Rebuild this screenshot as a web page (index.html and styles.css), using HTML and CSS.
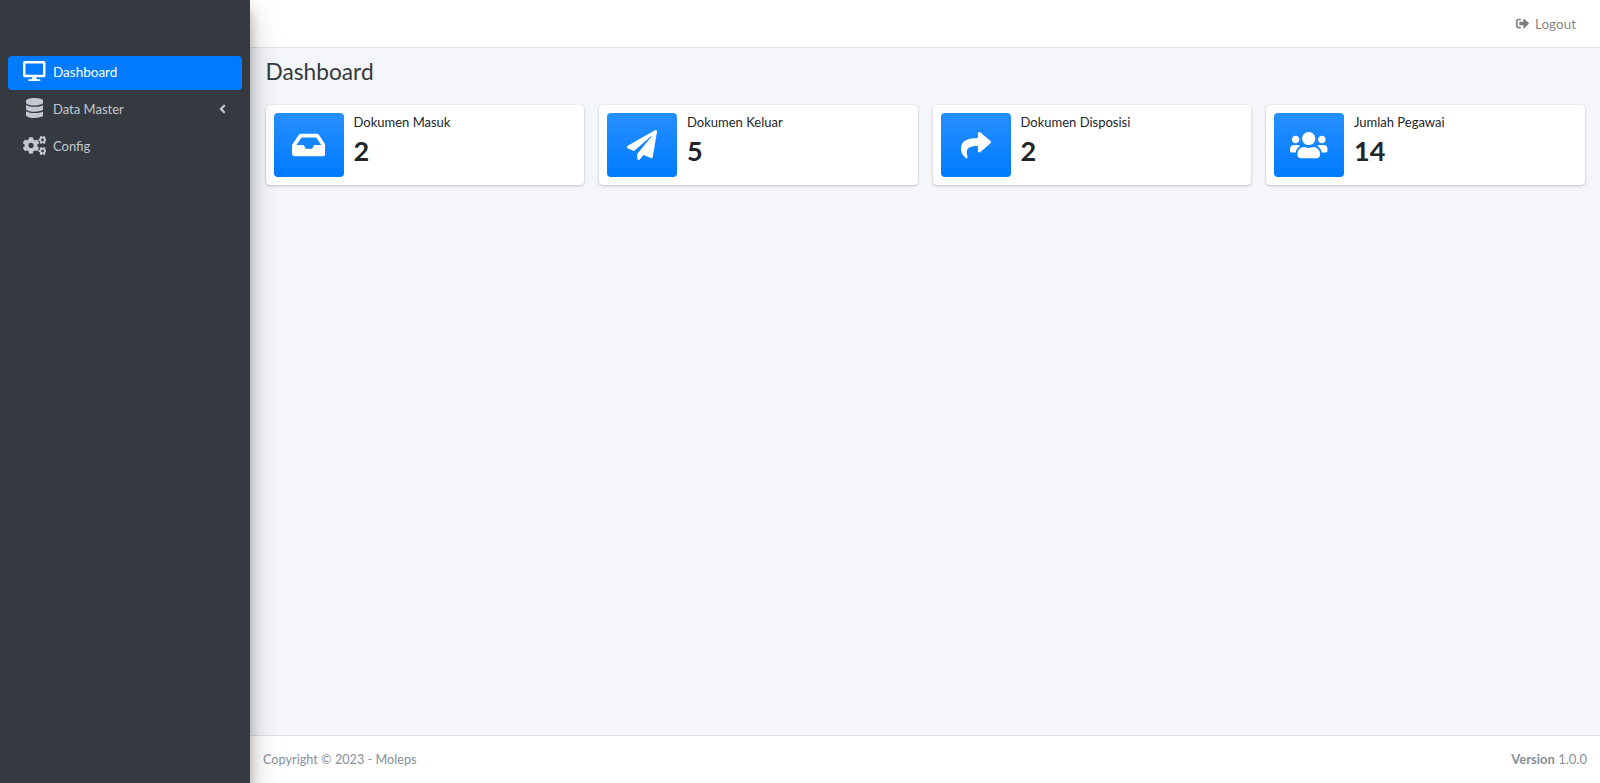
FILE: index.html
```html
<!DOCTYPE html>
<html lang="id">
  <head>
    <meta charset="UTF-8" />
    <meta name="viewport" content="width=device-width, initial-scale=1.0" />
    <title>Dashboard</title>
    <link rel="stylesheet" href="styles.css">
  </head>
  <body>
    <aside class="sidebar">
      <nav class="side-nav">
        <a class="nav-item active" href="#">
          <span class="nav-icon">
            <svg class="ico-desktop" viewBox="0 0 576 512"><path d="M528 0H48C21.5 0 0 21.5 0 48v320c0 26.5 21.5 48 48 48h192l-16 48h-72c-13.3 0-24 10.7-24 24s10.7 24 24 24h272c13.3 0 24-10.7 24-24s-10.7-24-24-24h-72l-16-48h192c26.5 0 48-21.5 48-48V48c0-26.5-21.5-48-48-48zm-16 352H64V64h448v288z"/></svg>
          </span>
          <span>Dashboard</span>
        </a>
        <a class="nav-item" href="#">
          <span class="nav-icon">
            <svg class="ico-database" viewBox="0 0 448 512"><path d="M448 73.143v45.714C448 159.143 347.667 192 224 192S0 159.143 0 118.857V73.143C0 32.857 100.333 0 224 0s224 32.857 224 73.143zM448 176v102.857C448 319.143 347.667 352 224 352S0 319.143 0 278.857V176c48.125 33.143 136.208 48.572 224 48.572S399.874 209.143 448 176zm0 160v102.857C448 479.143 347.667 512 224 512S0 479.143 0 438.857V336c48.125 33.143 136.208 48.572 224 48.572S399.874 369.143 448 336z"/></svg>
          </span>
          <span>Data Master</span>
          <svg class="nav-arrow" viewBox="0 0 256 512"><path d="M31.7 239l136-136c9.4-9.4 24.6-9.4 33.9 0l22.6 22.6c9.4 9.4 9.4 24.6 0 33.9L127.9 256l96.4 96.4c9.4 9.4 9.4 24.6 0 33.9L201.7 409c-9.4 9.4-24.6 9.4-33.9 0l-136-136c-9.5-9.4-9.5-24.6-.1-34z"/></svg>
        </a>
        <a class="nav-item" href="#">
          <span class="nav-icon">
            <svg class="ico-cogs" viewBox="0 0 640 512"><path d="M512.1 191l-8.2 14.3c-3 5.3-9.4 7.5-15.1 5.4-11.8-4.4-22.6-10.7-32.1-18.6-4.6-3.8-5.8-10.5-2.8-15.7l8.2-14.3c-6.9-8-12.3-17.3-15.9-27.4h-16.5c-6 0-11.2-4.3-12.2-10.3-2-12-2.1-24.6 0-37.1 1-6 6.2-10.4 12.2-10.4h16.5c3.6-10.1 9-19.4 15.9-27.4l-8.2-14.3c-3-5.2-1.9-11.9 2.8-15.7 9.5-7.9 20.4-14.2 32.1-18.6 5.7-2.1 12.1.1 15.1 5.4l8.2 14.3c10.5-1.9 21.2-1.9 31.7 0L552 6.3c3-5.3 9.4-7.5 15.1-5.4 11.8 4.4 22.6 10.7 32.1 18.6 4.6 3.8 5.8 10.5 2.8 15.7l-8.2 14.3c6.9 8 12.3 17.3 15.9 27.4h16.5c6 0 11.2 4.3 12.2 10.3 2 12 2.1 24.6 0 37.1-1 6-6.2 10.4-12.2 10.4h-16.5c-3.6 10.1-9 19.4-15.9 27.4l8.2 14.3c3 5.2 1.9 11.9-2.8 15.7-9.5 7.9-20.4 14.2-32.1 18.6-5.7 2.1-12.1-.1-15.1-5.4l-8.2-14.3c-10.4 1.9-21.2 1.9-31.7 0zm-10.5-58.8c38.5 29.6 82.4-14.3 52.8-52.8-38.5-29.7-82.4 14.3-52.8 52.8zM386.3 286.1l33.7 16.8c10.1 5.8 14.5 18.1 10.5 29.1-8.9 24.2-26.4 46.4-42.6 65.8-7.4 8.9-20.2 11.1-30.3 5.3l-29.1-16.8c-16 13.7-34.6 24.6-54.9 31.7v33.6c0 11.6-8.3 21.6-19.7 23.6-24.6 4.2-50.4 4.4-75.9 0-11.5-2-20-11.9-20-23.6V418c-20.3-7.2-38.9-18-54.9-31.7L74 403c-10 5.8-22.9 3.6-30.3-5.3-16.2-19.4-33.3-41.6-42.2-65.7-4-10.9.4-23.2 10.5-29.1l33.3-16.8c-3.9-20.9-3.9-42.4 0-63.4L12 205.8c-10.1-5.8-14.6-18.1-10.5-29 8.9-24.2 26-46.4 42.2-65.8 7.4-8.9 20.2-11.1 30.3-5.3l29.1 16.8c16-13.7 34.6-24.6 54.9-31.7V57.1c0-11.5 8.2-21.5 19.6-23.5 24.6-4.2 50.5-4.4 76-.1 11.5 2 20 11.9 20 23.6v33.6c20.3 7.2 38.9 18 54.9 31.7l29.1-16.8c10-5.8 22.9-3.6 30.3 5.3 16.2 19.4 33.2 41.6 42.1 65.8 4 10.9.1 23.2-10 29.1l-33.7 16.8c3.9 21 3.9 42.5 0 63.5zm-117.6 21.1c59.2-77-28.7-164.9-105.7-105.7-59.2 77 28.7 164.9 105.7 105.7zm243.4 182.7l-8.2 14.3c-3 5.3-9.4 7.5-15.1 5.4-11.8-4.4-22.6-10.7-32.1-18.6-4.6-3.8-5.8-10.5-2.8-15.7l8.2-14.3c-6.9-8-12.3-17.3-15.9-27.4h-16.5c-6 0-11.2-4.3-12.2-10.3-2-12-2.1-24.6 0-37.1 1-6 6.2-10.4 12.2-10.4h16.5c3.6-10.1 9-19.4 15.9-27.4l-8.2-14.3c-3-5.2-1.9-11.9 2.8-15.7 9.5-7.9 20.4-14.2 32.1-18.6 5.7-2.1 12.1.1 15.1 5.4l8.2 14.3c10.5-1.9 21.2-1.9 31.7 0l8.2-14.3c3-5.3 9.4-7.5 15.1-5.4 11.8 4.4 22.6 10.7 32.1 18.6 4.6 3.8 5.8 10.5 2.8 15.7l-8.2 14.3c6.9 8 12.3 17.3 15.9 27.4h16.5c6 0 11.2 4.3 12.2 10.3 2 12 2.1 24.6 0 37.1-1 6-6.2 10.4-12.2 10.4h-16.5c-3.6 10.1-9 19.4-15.9 27.4l8.2 14.3c3 5.2 1.9 11.9-2.8 15.7-9.5 7.9-20.4 14.2-32.1 18.6-5.7 2.1-12.1-.1-15.1-5.4l-8.2-14.3c-10.4 1.9-21.2 1.9-31.7 0zM501.6 431c38.5 29.6 82.4-14.3 52.8-52.8-38.5-29.6-82.4 14.3-52.8 52.8z"/></svg>
          </span>
          <span>Config</span>
        </a>
      </nav>
    </aside>

    <div class="wrapper">
      <header class="topbar">
        <a class="logout" href="#">
          <svg viewBox="0 0 512 512"><path d="M497 273L329 441c-15 15-41 4.5-41-17v-96H152c-13.3 0-24-10.7-24-24v-96c0-13.3 10.7-24 24-24h136V88c0-21.4 25.9-32 41-17l168 168c9.3 9.4 9.3 24.6 0 34zM192 436v-40c0-6.6-5.4-12-12-12H96c-17.7 0-32-14.3-32-32V160c0-17.7 14.3-32 32-32h84c6.6 0 12-5.4 12-12V76c0-6.6-5.4-12-12-12H96c-53 0-96 43-96 96v192c0 53 43 96 96 96h84c6.6 0 12-5.4 12-12z"/></svg>
          Logout
        </a>
      </header>

      <main class="content">
        <h1>Dashboard</h1>
        <div class="cards">
          <div class="card">
            <div class="card-icon">
              <svg viewBox="0 0 576 512"><path d="M567.938 243.908L462.25 85.374A48.003 48.003 0 0 0 422.311 64H153.689a48 48 0 0 0-39.938 21.374L8.062 243.908A47.994 47.994 0 0 0 0 270.533V400c0 26.51 21.49 48 48 48h480c26.51 0 48-21.49 48-48V270.533a47.994 47.994 0 0 0-8.062-26.625zM162.252 128h251.497l85.333 128H376l-32 64H232l-32-64H76.918l85.334-128z"/></svg>
            </div>
            <div class="card-body">
              <span class="card-label">Dokumen Masuk</span>
              <span class="card-value">2</span>
            </div>
          </div>
          <div class="card">
            <div class="card-icon">
              <svg viewBox="0 0 512 512"><path d="M476 3.2L12.5 270.6c-18.1 10.4-15.8 35.6 2.2 43.2L121 358.4l287.3-253.2c5.5-4.9 13.3 2.6 8.6 8.3L176 407v80.5c0 23.6 28.5 32.9 42.5 15.8L282 426l124.6 52.2c14.2 6 30.4-2.9 33-18.2l72-432C515 7.8 493.3-6.8 476 3.2z"/></svg>
            </div>
            <div class="card-body">
              <span class="card-label">Dokumen Keluar</span>
              <span class="card-value">5</span>
            </div>
          </div>
          <div class="card">
            <div class="card-icon">
              <svg viewBox="0 0 512 512"><path d="M503.691 189.836L327.687 37.851C312.281 24.546 288 35.347 288 56.015v80.053C127.371 137.907 0 170.1 0 322.326c0 61.441 39.581 122.309 83.333 154.132 13.653 9.931 33.111-2.533 28.077-18.631C66.066 312.814 132.917 274.316 288 272.085V360c0 20.7 24.3 31.453 39.687 18.164l176.004-152c11.071-9.562 11.086-26.753 0-36.328z"/></svg>
            </div>
            <div class="card-body">
              <span class="card-label">Dokumen Disposisi</span>
              <span class="card-value">2</span>
            </div>
          </div>
          <div class="card">
            <div class="card-icon">
              <svg viewBox="0 0 640 512"><path d="M96 224c35.3 0 64-28.7 64-64s-28.7-64-64-64-64 28.7-64 64 28.7 64 64 64zm448 0c35.3 0 64-28.7 64-64s-28.7-64-64-64-64 28.7-64 64 28.7 64 64 64zm32 32h-64c-17.6 0-33.5 7.1-45.1 18.6 40.3 22.1 68.9 62 75.1 109.4h66c17.7 0 32-14.3 32-32v-32c0-35.3-28.7-64-64-64zm-256 0c61.9 0 112-50.1 112-112S381.9 32 320 32 208 82.1 208 144s50.1 112 112 112zm76.8 32h-8.3c-20.8 10-43.9 16-68.5 16s-47.6-6-68.5-16h-8.3C179.6 288 128 339.6 128 403.2V432c0 26.5 21.5 48 48 48h288c26.5 0 48-21.5 48-48v-28.8c0-63.6-51.6-115.2-115.2-115.2zm-223.7-13.4C161.5 263.1 145.6 256 128 256H64c-35.3 0-64 28.7-64 64v32c0 17.7 14.3 32 32 32h65.9c6.3-47.4 34.9-87.3 75.2-109.4z"/></svg>
            </div>
            <div class="card-body">
              <span class="card-label">Jumlah Pegawai</span>
              <span class="card-value">14</span>
            </div>
          </div>
        </div>
      </main>

      <footer class="footer">
        <span class="copyright">Copyright © 2023 - Moleps</span>
        <span><b>Version</b> 1.0.0</span>
      </footer>
    </div>
  </body>
</html>
```

FILE: styles.css
```css
* {
  box-sizing: border-box;
}
body {
  font-family: Lato, "Noto Sans", sans-serif;
  font-size: 13px;
  margin: 0;
  height: 100vh;
  overflow: hidden;
  display: flex;
  color: #212529;
  background-color: #f4f6f9;
}
a {
  text-decoration: none;
}
svg {
  display: block;
  fill: currentColor;
}

/* sidebar */
.sidebar {
  width: 250px;
  flex-shrink: 0;
  padding: 56px 8px 0;
  background-color: #343a40;
  box-shadow: 0 14px 28px rgba(0, 0, 0, 0.25), 0 10px 10px rgba(0, 0, 0, 0.22);
  z-index: 2;
}
.side-nav {
  display: flex;
  flex-direction: column;
  gap: 3px;
}
.nav-item {
  display: flex;
  align-items: center;
  height: 34px;
  padding-bottom: 2px;
  border-radius: 4px;
  color: #c2c7d0;
}
.nav-item.active {
  background-color: #007bff;
  color: #fff;
  font-size: 13.5px;
}
.nav-icon {
  width: 45px;
  flex-shrink: 0;
  padding-left: 8px;
  padding-bottom: 2px;
  display: flex;
  justify-content: center;
}
.ico-desktop {
  height: 20px;
}
.ico-database {
  height: 20px;
}
.ico-cogs {
  height: 19px;
}
.nav-arrow {
  height: 14px;
  margin-left: auto;
  margin-right: 16px;
}

/* main column */
.wrapper {
  flex: 1;
  display: flex;
  flex-direction: column;
  min-width: 0;
}
.topbar {
  height: 48px;
  flex-shrink: 0;
  display: flex;
  justify-content: flex-end;
  align-items: center;
  padding: 0 24px 0 0;
  background-color: #fff;
  border-bottom: 1px solid #dee2e6;
}
.logout {
  display: flex;
  align-items: center;
  gap: 6px;
  font-size: 13.5px;
  color: rgba(0, 0, 0, 0.5);
}
.logout svg {
  height: 13px;
}
.content {
  flex: 1;
  padding: 7px 15.5px 0;
}
h1 {
  margin: 0 0 17px;
  font-size: 22.7px;
  font-weight: 400;
  line-height: 33px;
  color: #343a40;
}
.cards {
  display: grid;
  grid-template-columns: repeat(4, 1fr);
  gap: 15px;
}
.card {
  display: flex;
  height: 80px;
  padding: 8px;
  background-color: #fff;
  border-radius: 4px;
  box-shadow: 0 0 1px rgba(0, 0, 0, 0.125), 0 1px 3px rgba(0, 0, 0, 0.2);
}
.card-icon {
  width: 70px;
  flex-shrink: 0;
  display: flex;
  align-items: center;
  justify-content: center;
  color: #fff;
  border-radius: 4px;
  background: linear-gradient(to bottom, #268fff, #007bff);
}
.card-icon svg {
  height: 30px;
}
.card-body {
  display: flex;
  flex-direction: column;
  padding: 0 10px;
}
.card-label {
  line-height: 18px;
}
.card-value {
  margin-top: 2px;
  font-size: 27px;
  font-weight: 700;
  line-height: 36px;
}

.footer {
  height: 48px;
  flex-shrink: 0;
  display: flex;
  justify-content: space-between;
  align-items: center;
  padding: 0 13px 2px;
  color: #869099;
  background-color: #fff;
  border-top: 1px solid #dee2e6;
}
.copyright {
  font-size: 12.7px;
}
```
